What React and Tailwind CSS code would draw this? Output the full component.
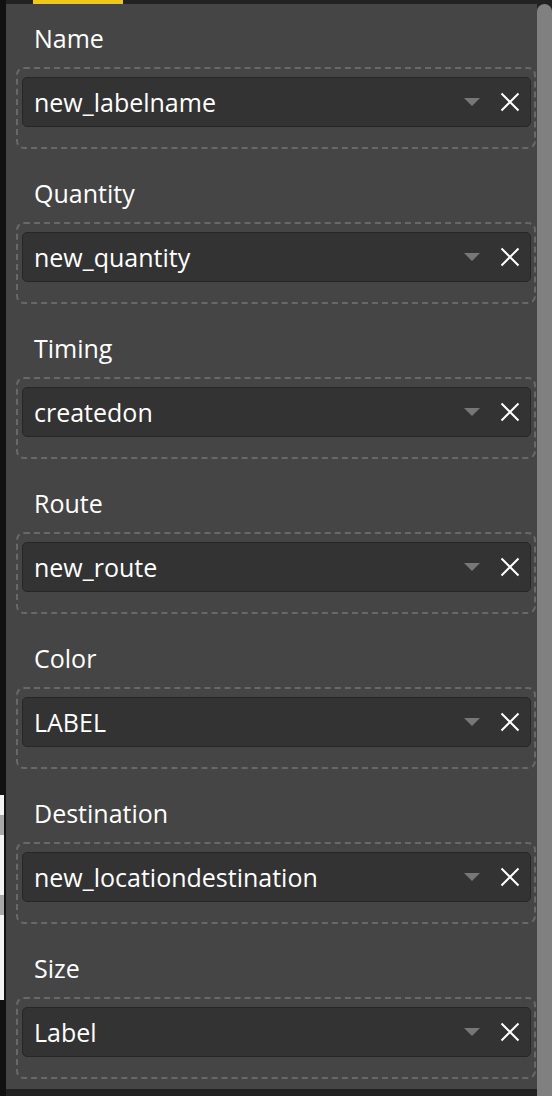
import React from "react";

const fields = [
  ["Name", "new_labelname"],
  ["Quantity", "new_quantity"],
  ["Timing", "createdon"],
  ["Route", "new_route"],
  ["Color", "LABEL"],
  ["Destination", "new_locationdestination"],
  ["Size", "Label"],
];

function Caret() {
  return (
    <svg width="18" height="10" viewBox="0 0 18 10" className="shrink-0">
      <path d="M1 1 H17 L9 9 Z" fill="#777777" />
    </svg>
  );
}

function Close() {
  return (
    <svg width="20" height="20" viewBox="0 0 20 20" className="shrink-0">
      <path d="M1.5 1.5 L18.5 18.5 M18.5 1.5 L1.5 18.5" stroke="#ffffff" strokeWidth="2" fill="none" />
    </svg>
  );
}

function Section({ label, value }) {
  return (
    <div className="flex flex-col">
      <div className="h-[32px] leading-[32px] text-[25px] text-white pl-[18px]">{label}</div>
      <div className="mt-[13px] h-[82px] rounded-[8px] border-2 border-dashed border-[#686868] pt-[8px] pl-[4px] pr-[3px]">
        <div className="h-[50px] rounded-[5px] border border-[#262626] bg-[#333333] flex items-center pl-[11px] pr-[10px]">
          <span className="flex-1 text-[25px] leading-[32px] text-white">{value}</span>
          <Caret />
          <div className="w-[19px]" />
          <Close />
        </div>
      </div>
    </div>
  );
}

export default function App() {
  return (
    <div
      className="w-[552px] h-[1096px] flex overflow-hidden bg-black"
      style={{ fontFamily: '"Open Sans", "Noto Sans", sans-serif' }}
    >
      <div className="w-[4px] flex flex-col">
        <div className="h-[795px] bg-[#111111]" />
        <div className="h-[20px] bg-[#f2f2f2]" />
        <div className="h-[20px] bg-[#a8a8a8]" />
        <div className="h-[60px] bg-[#f2f2f2]" />
        <div className="h-[20px] bg-[#a8a8a8]" />
        <div className="h-[85px] bg-[#f2f2f2]" />
        <div className="flex-1 bg-[#111111]" />
      </div>
      <div className="w-[2px] bg-[#111111]" />
      <div className="w-[531px] flex flex-col">
        <div className="h-[4px] bg-[#222222] flex">
          <div className="ml-[27px] w-[90px] bg-[#f2c811]" />
        </div>
        <div className="flex-1 bg-[#454545] pt-[18px] pl-[10px] pr-[1px] flex flex-col gap-[28px] overflow-hidden">
          {fields.map(([l, v]) => (
            <Section key={l} label={l} value={v} />
          ))}
        </div>
        <div className="h-[7px] bg-[#222222]" />
      </div>
      <div className="w-[15px] flex flex-col bg-[#222222]">
        <div className="h-[4px]" />
        <div className="flex-1 bg-[#808080] rounded-t-[8px]" />
      </div>
    </div>
  );
}
